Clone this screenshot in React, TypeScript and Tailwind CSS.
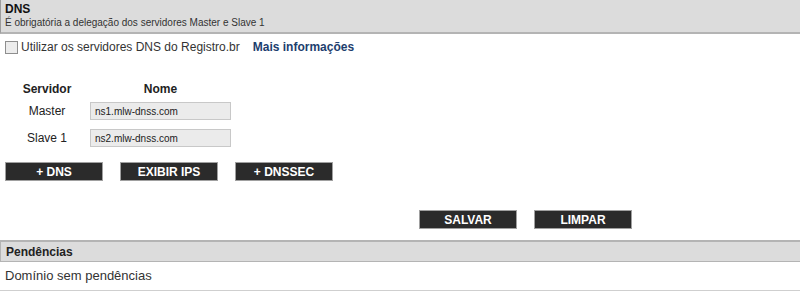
import { useState } from "react";

const servers = [
  { label: "Master", value: "ns1.mlw-dnss.com" },
  { label: "Slave 1", value: "ns2.mlw-dnss.com" },
];

function DarkButton({ children }: { children: React.ReactNode }) {
  return (
    <button
      type="button"
      className="flex h-[19px] w-[98px] items-center justify-center border border-[#a0a0a0] bg-[#2b2b2b] text-[12px] font-bold leading-none text-white"
    >
      {children}
    </button>
  );
}

export default function App() {
  const [useRegistro, setUseRegistro] = useState(false);

  return (
    <div className="h-[299px] w-[800px] bg-white font-['Liberation_Sans',Arial,sans-serif] text-[#222]">
      <div className="h-[34px] border-b-2 border-l border-[#b4b4b4] border-l-[#9c9c9c] bg-[#dcdcdc] px-[4px] pt-[2px]">
        <div className="text-[12px] font-bold leading-[14px] text-[#111]">DNS</div>
        <div className="text-[10px] leading-[13px] text-[#333]">
          É obrigatória a delegação dos servidores Master e Slave 1
        </div>
      </div>

      <label className="mt-[5px] flex items-center pl-[5px] text-[12px] leading-[16px]">
        <input
          type="checkbox"
          checked={useRegistro}
          onChange={(e) => setUseRegistro(e.target.checked)}
          className="m-0 h-[13px] w-[13px] appearance-none border border-[#8e8e8e] bg-[#ececec]"
        />
        <span className="ml-[3px] text-[12px] text-[#333]">Utilizar os servidores DNS do Registro.br</span>
        <a className="ml-[13px] text-[12px] font-bold text-[#1d3e6e]">Mais informações</a>
      </label>

      <div className="mt-[27px] grid grid-cols-[86px_145px] text-[12px]">
        <div className="pl-[8px] text-center font-bold leading-[14px]">Servidor</div>
        <div className="pl-[4px] text-center font-bold leading-[14px]">Nome</div>
        {servers.map((s, i) => (
          <div key={s.label} className="contents">
            <div
              className={`flex h-[18px] items-center justify-center pl-[8px] text-[12px] ${i === 0 ? "mt-[6px]" : "mt-[9px]"}`}
            >
              {s.label}
            </div>
            <div className={`pl-[4px] ${i === 0 ? "mt-[6px]" : "mt-[9px]"}`}>
              <input
                readOnly
                value={s.value}
                className="block h-[18px] w-[141px] border border-[#c8c8c8] bg-[#ebebeb] px-[4px] text-[10px] text-[#222]"
              />
            </div>
          </div>
        ))}
      </div>

      <div className="mt-[15px] flex gap-[17px] pl-[5px]">
        <DarkButton>+ DNS</DarkButton>
        <DarkButton>EXIBIR IPS</DarkButton>
        <DarkButton>+ DNSSEC</DarkButton>
      </div>

      <div className="mt-[29px] flex gap-[17px] pl-[419px]">
        <DarkButton>SALVAR</DarkButton>
        <DarkButton>LIMPAR</DarkButton>
      </div>

      <div className="mt-[11px] flex h-[22px] items-center border-t-2 border-b border-l border-[#b4b4b4] bg-[#dcdcdc] pl-[5px] text-[12px] font-bold">
        Pendências
      </div>
      <div className="flex h-[29px] items-center border-b border-[#cfcfcf] pl-[5px] text-[13px] text-[#333]">
        Domínio sem pendências
      </div>
    </div>
  );
}
